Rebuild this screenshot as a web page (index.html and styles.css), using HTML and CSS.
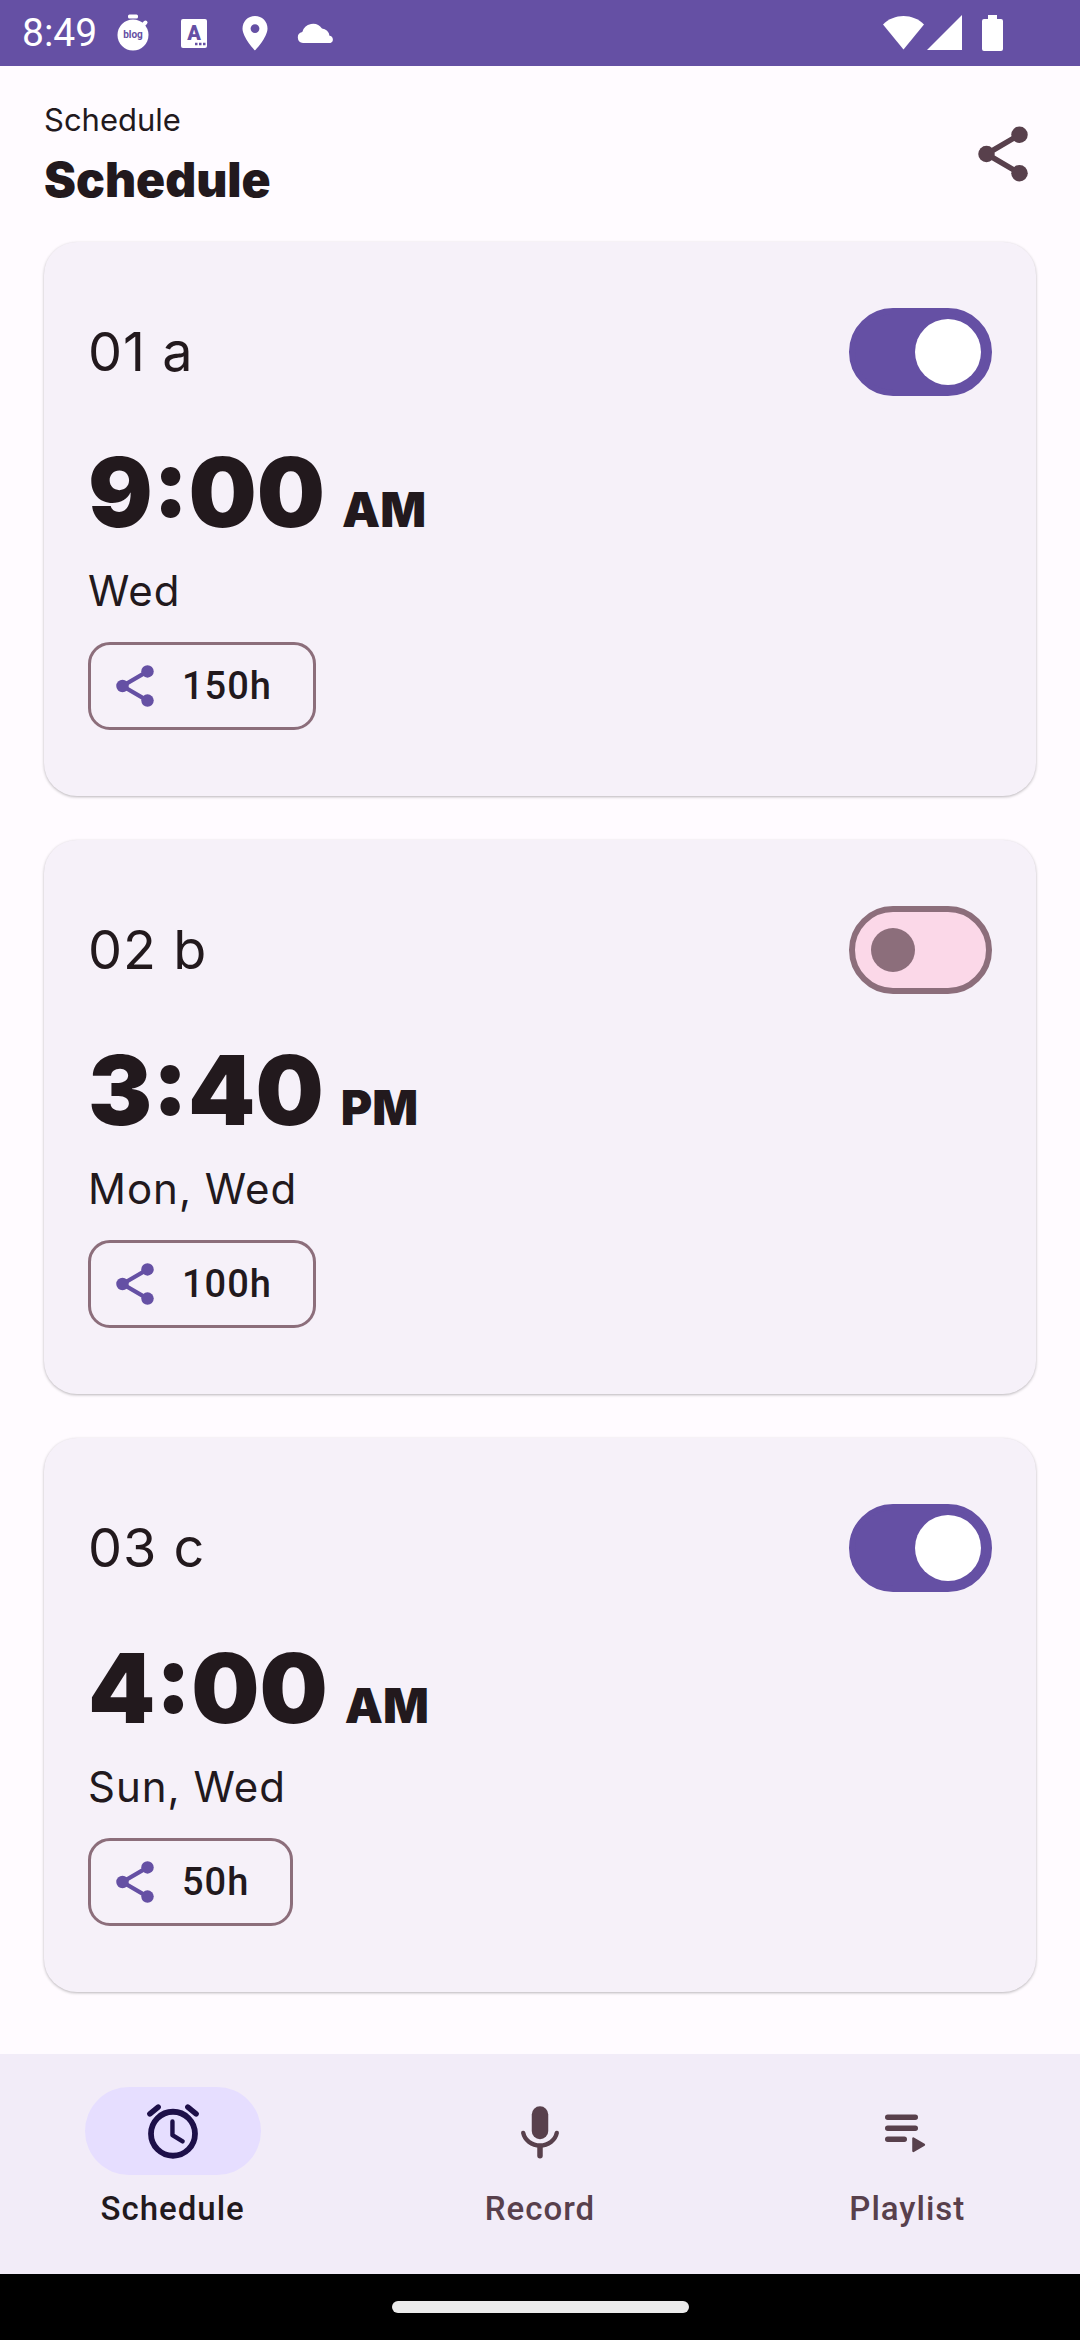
FILE: index.html
```html
<!DOCTYPE html>
<html lang="en">
<head>
<meta charset="utf-8">
<meta name="viewport" content="width=device-width, initial-scale=1">
<title>Schedule</title>
<link rel="stylesheet" href="styles.css">
</head>
<body>
<svg class="symbols" aria-hidden="true">
  <symbol id="share" viewBox="0 0 24 24">
    <path d="M18 5 6 12l12 7" fill="none" stroke="currentColor" stroke-width="2"/>
    <circle cx="18" cy="5" r="3" fill="currentColor"/>
    <circle cx="6" cy="12" r="3" fill="currentColor"/>
    <circle cx="18" cy="19" r="3" fill="currentColor"/>
  </symbol>
</svg>

<div class="status-bar">
  <div class="status-left">
    <span class="clock">8:49</span>
    <div class="notifications">
      <svg class="notice" viewBox="0 0 44 44">
        <circle cx="22" cy="24" r="15.500" fill="#fff"/>
        <rect x="17" y="3.500" width="10" height="4" rx="1.500" fill="#fff"/>
        <path d="m31 15 3.500-3.500" stroke="#fff" stroke-width="4" stroke-linecap="round"/>
        <text class="notice-blog" x="22" y="27" text-anchor="middle">blog</text>
      </svg>
      <svg class="notice" viewBox="0 0 44 44">
        <rect x="9" y="8" width="26" height="29" rx="2" fill="#fff"/>
        <text class="notice-letter" x="22" y="29" text-anchor="middle">A</text>
        <path d="M23 33h2.500M27 33h2.500M31 33h2.500" stroke="#6550a4" stroke-width="2.500"/>
      </svg>
      <svg class="notice" viewBox="0 0 44 44">
        <path fill="#fff" fill-rule="evenodd" d="M22 5C15 5 9.500 10.400 9.500 17.500 9.500 26.500 22 39.500 22 39.500S34.500 26.500 34.500 17.500C34.500 10.400 29 5 22 5Zm0 8.200a4.400 4.400 0 1 1 0 8.800 4.400 4.400 0 0 1 0-8.800Z"/>
      </svg>
      <svg class="notice" viewBox="0 0 44 44">
        <path fill="#fff" d="M9 32a5.500 5.500 0 0 1-.700-10.900A11 11 0 0 1 28 17.500a8 8 0 0 1 7.500 7.200A3.800 3.800 0 0 1 36.500 32Z"/>
      </svg>
    </div>
  </div>
  <div class="status-right">
    <div class="signals">
      <svg class="wifi" viewBox="0 0 41 36"><path fill="#fff" d="M0 9.500C11-2 30-2 41 9.500L20.500 34.500Z"/></svg>
      <svg class="cell" viewBox="0 0 35 36"><path fill="#fff" d="M35 0v35H0Z"/></svg>
    </div>
    <svg class="battery" viewBox="0 0 21 36"><path fill="#fff" d="M6 0h9v4h4a2 2 0 0 1 2 2v28a2 2 0 0 1-2 2H2a2 2 0 0 1-2-2V6a2 2 0 0 1 2-2h4Z"/></svg>
  </div>
</div>

<header class="app-bar">
  <div class="headings">
    <p class="overline">Schedule</p>
    <h1 class="title">Schedule</h1>
  </div>
  <button class="icon-button" type="button" aria-label="Share"><svg class="icon"><use href="#share"/></svg></button>
</header>

<main class="alarms">
  <article class="card">
    <div class="card-head">
      <label class="name" for="alarm-1">01 a</label>
      <input class="switch" id="alarm-1" type="checkbox" role="switch" checked>
    </div>
    <p class="time"><span class="clock-time">9:00</span> <span class="period">AM</span></p>
    <p class="days">Wed</p>
    <button class="chip" type="button"><svg class="chip-icon"><use href="#share"/></svg>150h</button>
  </article>

  <article class="card">
    <div class="card-head">
      <label class="name" for="alarm-2">02 b</label>
      <input class="switch" id="alarm-2" type="checkbox" role="switch">
    </div>
    <p class="time"><span class="clock-time">3:40</span> <span class="period">PM</span></p>
    <p class="days">Mon, Wed</p>
    <button class="chip" type="button"><svg class="chip-icon"><use href="#share"/></svg>100h</button>
  </article>

  <article class="card">
    <div class="card-head">
      <label class="name" for="alarm-3">03 c</label>
      <input class="switch" id="alarm-3" type="checkbox" role="switch" checked>
    </div>
    <p class="time"><span class="clock-time">4:00</span> <span class="period">AM</span></p>
    <p class="days">Sun, Wed</p>
    <button class="chip" type="button"><svg class="chip-icon"><use href="#share"/></svg>50h</button>
  </article>
</main>

<nav class="tabs">
  <a class="tab tab-active" href="#schedule" aria-current="page">
    <span class="tab-icon">
      <svg class="icon" viewBox="0 0 24 24" fill="none" stroke="currentColor" stroke-linecap="round" stroke-linejoin="round">
        <circle cx="12" cy="13" r="8" stroke-width="2.100"/>
        <path d="M3.600 5.800 6.600 3.300M20.400 5.800l-3-2.500" stroke-width="2"/>
        <path d="M11.800 8.500v5l3.700 2.300" stroke-width="1.600"/>
      </svg>
    </span>
    Schedule
  </a>
  <a class="tab" href="#record">
    <span class="tab-icon">
      <svg class="icon" viewBox="0 0 24 24" fill="none" stroke="currentColor" stroke-linecap="round">
        <rect x="9" y="3" width="6" height="12" rx="3" fill="currentColor" stroke="none"/>
        <path d="M5.900 12.700a6.200 5.600 0 0 0 12.200 0" stroke-width="1.600"/>
        <path d="M12 18v3" stroke-width="2"/>
      </svg>
    </span>
    Record
  </a>
  <a class="tab" href="#playlist">
    <span class="tab-icon">
      <svg class="icon" viewBox="0 0 24 24" fill="none" stroke="currentColor" stroke-linecap="round" stroke-linejoin="round">
        <path d="M5 7h10M5 11h10M5 15h6" stroke-width="2"/>
        <path d="M14.300 14.700v4.600l3.900-2.300Z" fill="currentColor" stroke-width=".8"/>
      </svg>
    </span>
    Playlist
  </a>
</nav>

<div class="gesture-bar"><div class="gesture-handle"></div></div>
</body>
</html>
```

FILE: styles.css
```css
* {
  box-sizing: border-box;
}

body {
  display: flex;
  flex-direction: column;
  min-height: 100vh;
  margin: 0;
  background: #fffbff;
  color: #22191d;
  font-family: Roboto, "Noto Sans", sans-serif;
}

p,
h1 {
  margin: 0;
}

button {
  margin: 0;
  padding: 0;
  border: 0;
  background: none;
  color: inherit;
  font: inherit;
}

svg {
  display: block;
}

.symbols {
  display: none;
}

/* System status bar */

.status-bar {
  display: flex;
  align-items: center;
  justify-content: space-between;
  height: 66px;
  padding: 0 77px 0 22px;
  background: #6550a4;
  color: #fff;
}

.status-left {
  display: flex;
  align-items: center;
  gap: 14px;
}

.clock {
  font-size: 39px;
  line-height: 66px;
}

.notifications {
  display: flex;
  gap: 17px;
}

.notice {
  width: 44px;
  height: 44px;
}

.notice-blog {
  fill: #6550a4;
  font: 700 10px Roboto, sans-serif;
}

.notice-letter {
  fill: #6550a4;
  font: 900 20px Roboto, sans-serif;
}

.status-right {
  display: flex;
  gap: 20px;
}

.signals {
  display: flex;
  gap: 3px;
}

.wifi {
  width: 41px;
  height: 36px;
}

.cell {
  width: 35px;
  height: 36px;
}

.battery {
  width: 21px;
  height: 36px;
}

/* App bar */

.app-bar {
  display: flex;
  align-items: center;
  justify-content: space-between;
  padding: 32px 44px;
}

.headings {
  display: grid;
  gap: 8px;
}

.overline {
  font-family: Inter, sans-serif;
  font-size: 31px;
  line-height: 44px;
}

.title {
  font-family: Inter, sans-serif;
  font-size: 48px;
  font-weight: 900;
  line-height: 60px;
}

.icon-button {
  color: #58404c;
}

.icon {
  width: 66px;
  height: 66px;
}

/* Alarm cards */

.alarms {
  display: flex;
  flex: 1;
  flex-direction: column;
  gap: 44px;
  padding: 0 44px 62px;
}

.card {
  padding: 66px 44px;
  border-radius: 33px;
  background: #f6f1f9;
  box-shadow: 0 1px 3px rgba(0, 0, 0, 0.28);
}

.card-head {
  display: flex;
  align-items: center;
  justify-content: space-between;
}

.name {
  font-family: Inter, sans-serif;
  font-size: 54px;
  letter-spacing: 1px;
  line-height: 66px;
}

.switch {
  display: flex;
  align-items: center;
  width: 143px;
  height: 88px;
  margin: 0;
  padding: 0 16px;
  border: 6px solid #8c6e7b;
  border-radius: 44px;
  background: #fbd8e8;
  appearance: none;
}

.switch::before {
  width: 44px;
  height: 44px;
  border-radius: 50%;
  background: #8c6e7b;
  content: "";
}

.switch:checked {
  justify-content: flex-end;
  padding: 0 5px;
  border-color: #6550a4;
  background: #6550a4;
}

.switch:checked::before {
  width: 66px;
  height: 66px;
  background: #fff;
}

.time {
  display: flex;
  align-items: baseline;
  gap: 17px;
  margin-top: 38px;
  font-family: Inter, sans-serif;
  font-weight: 900;
}

.clock-time {
  font-size: 96px;
  line-height: 116px;
}

.period {
  font-size: 48px;
  line-height: 60px;
}

.days {
  margin-top: 8px;
  font-family: Inter, sans-serif;
  font-size: 42px;
  letter-spacing: 1px;
  line-height: 66px;
}

.chip {
  display: flex;
  align-items: center;
  gap: 22px;
  height: 88px;
  margin-top: 18px;
  padding: 0 41px 0 19px;
  border: 3px solid #8c6e7b;
  border-radius: 22px;
  font-size: 38px;
  font-weight: 500;
  letter-spacing: 1px;
}

.chip-icon {
  width: 50px;
  height: 50px;
  color: #6550a4;
}

/* Bottom navigation */

.tabs {
  display: grid;
  grid-template-columns: repeat(3, 1fr);
  gap: 22px;
  padding: 33px 0 43px;
  background: #f2ecf8;
}

.tab {
  display: flex;
  flex-direction: column;
  align-items: center;
  gap: 12px;
  color: #58404c;
  font-size: 33px;
  font-weight: 500;
  letter-spacing: 1px;
  line-height: 44px;
  text-decoration: none;
}

.tab-active {
  color: #22191d;
}

.tab-icon {
  display: grid;
  place-items: center;
  width: 176px;
  height: 88px;
  border-radius: 44px;
}

.tab-active .tab-icon {
  background: #e6deff;
  color: #1d0f49;
}

.gesture-bar {
  display: grid;
  place-items: center;
  height: 66px;
  background: #000;
}

.gesture-handle {
  width: 297px;
  height: 12px;
  border-radius: 6px;
  background: #ebebeb;
}
```
